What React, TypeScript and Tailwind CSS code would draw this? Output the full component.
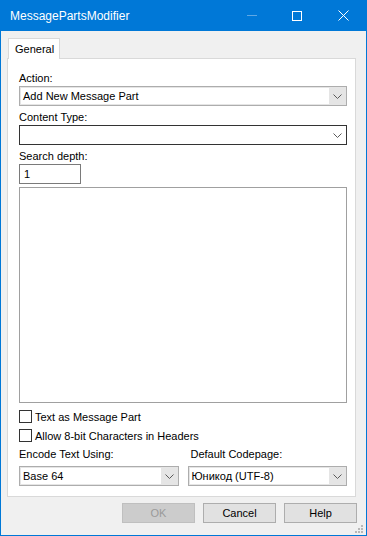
import React from 'react';

const Chevron = () => (
    <svg width="9" height="5" viewBox="0 0 9 5" className="block">
        <path d="M0.5 0.5 L4.5 4.5 L8.5 0.5" fill="none" stroke="#5a5a5a" strokeWidth="1" />
    </svg>
);

const DropList = ({ value, className = '' }: { value: string; className?: string }) => (
    <div className={`flex h-[20px] border border-[#adadad] bg-[#e5e5e5] ${className}`}>
        <div className="flex-1 flex items-center bg-white m-px mr-0 pl-[2px] leading-[14px] text-black">{value}</div>
        <div className="w-[17px] flex items-center justify-center">
            <Chevron />
        </div>
    </div>
);

const Label = ({ children, className = '' }: { children: React.ReactNode; className?: string }) => (
    <div className={`h-[14px] leading-[14px] text-black ${className}`}>{children}</div>
);

const Check = ({ label, className = '' }: { label: string; className?: string }) => (
    <div className={`flex items-start gap-[3px] ${className}`}>
        <div className="w-[13px] h-[13px] border border-[#333333] bg-white" />
        <span className="h-[14px] leading-[14px] text-black">{label}</span>
    </div>
);

const Button = ({ label, disabled }: { label: string; disabled?: boolean }) => (
    <button
        className={
            disabled
                ? 'w-[73px] h-[20px] border border-[#bfbfbf] bg-[#cccccc] text-[#9a9a9a] leading-[14px]'
                : 'w-[73px] h-[20px] border border-[#adadad] bg-[#e1e1e1] text-black leading-[14px]'
        }
    >
        {label}
    </button>
);

export default function App() {
    return (
        <div className="w-[367px] h-[536px] bg-[#0078d7] flex flex-col font-['Liberation_Sans',Arial,sans-serif] text-[11px]">
            {/* title bar */}
            <div className="h-[31px] flex items-center text-white">
                <span className="pl-[10px] text-[12px] leading-[14px] flex-1 pt-[1px]">MessagePartsModifier</span>
                <div className="w-[10px] h-px bg-[#5fa8e5] mr-[35px]" />
                <div className="w-[10px] h-[10px] border border-white mr-[36px]" />
                <svg width="11" height="11" viewBox="0 0 11 11" className="mr-[18px]">
                    <path d="M0.5 0.5 L10.5 10.5 M10.5 0.5 L0.5 10.5" stroke="white" strokeWidth="1" />
                </svg>
            </div>

            {/* body */}
            <div className="flex-1 mx-px mb-px bg-[#f0f0f0] flex flex-col relative">
                <div className="pt-[7px] pl-[7px] flex">
                    <div className="relative z-10 w-[52px] h-[21px] border border-b-0 border-[#d9d9d9] bg-white pl-[6px] pt-[3px] leading-[14px] text-black">
                        General
                    </div>
                </div>
                <div className="-mt-px ml-[6px] mr-[10px] border border-[#d9d9d9] bg-white pl-[11px] pr-[8px] pt-[12px] pb-[10px] flex flex-col">
                    <Label>Action:</Label>
                    <DropList value="Add New Message Part" className="mt-px" />

                    <Label className="mt-[4px]">Content Type:</Label>
                    <div className="mt-px h-[20px] border border-[#333333] bg-white flex justify-end items-center pr-[4px]">
                        <Chevron />
                    </div>

                    <Label className="mt-[4px]">Search depth:</Label>
                    <div className="mt-px w-[62px] h-[20px] border border-[#7a7a7a] bg-white pl-[4px] flex items-center leading-[14px] text-black">
                        1
                    </div>

                    <div className="mt-[3px] h-[216px] border border-[#a0a0a0] bg-white" />

                    <Check label="Text as Message Part" className="mt-[7px]" />
                    <Check label="Allow 8-bit Characters in Headers" className="mt-[5px]" />

                    <div className="mt-[4px] grid grid-cols-2 gap-x-[9px]">
                        <div className="flex flex-col">
                            <Label>Encode Text Using:</Label>
                            <DropList value="Base 64" className="mt-[5px]" />
                        </div>
                        <div className="flex flex-col">
                            <Label className="pl-[3px]">Default Codepage:</Label>
                            <DropList value="Юникод (UTF-8)" className="mt-[5px]" />
                        </div>
                    </div>
                </div>

                <div className="mt-[6px] pr-[9px] flex justify-end gap-[8px]">
                    <Button label="OK" disabled />
                    <Button label="Cancel" />
                    <Button label="Help" />
                </div>

                <svg width="10" height="10" viewBox="0 0 10 10" className="absolute right-[2px] bottom-[1px]">
                    <rect x="7" y="1" width="2" height="2" fill="#b8b8b8" />
                    <rect x="4" y="4" width="2" height="2" fill="#b8b8b8" />
                    <rect x="7" y="4" width="2" height="2" fill="#b8b8b8" />
                    <rect x="1" y="7" width="2" height="2" fill="#b8b8b8" />
                    <rect x="4" y="7" width="2" height="2" fill="#b8b8b8" />
                    <rect x="7" y="7" width="2" height="2" fill="#b8b8b8" />
                </svg>
            </div>
        </div>
    );
}
